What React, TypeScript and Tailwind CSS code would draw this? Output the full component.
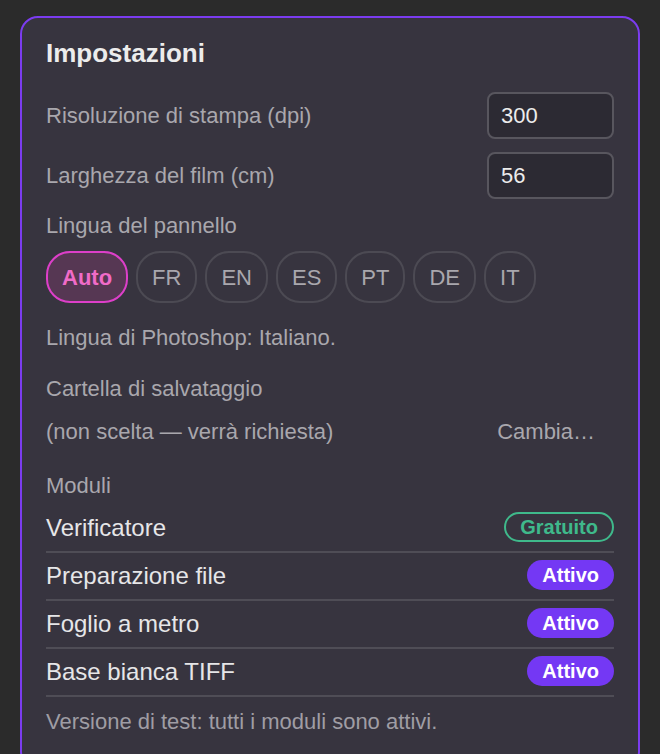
import { useState } from "react";

const lingue = ["Auto", "FR", "EN", "ES", "PT", "DE", "IT"];

const moduli = [
  { nome: "Verificatore", stato: "Gratuito" },
  { nome: "Preparazione file", stato: "Attivo" },
  { nome: "Foglio a metro", stato: "Attivo" },
  { nome: "Base bianca TIFF", stato: "Attivo" },
];

export default function App() {
  const [lingua, setLingua] = useState("Auto");
  const [dpi, setDpi] = useState("300");
  const [larghezza, setLarghezza] = useState("56");

  return (
    <div
      className="min-h-[754px] bg-[#2b2b2b] px-5 pt-4"
      style={{ fontFamily: '"Liberation Sans", Arial, sans-serif' }}
    >
      <div className="rounded-[18px] border-2 border-[#7b3cf0] bg-[#37343f] px-6 pt-[17px] pb-8">
        <h1 className="text-[26px] leading-[36px] font-bold text-[#ececec]">Impostazioni</h1>

        {/* Campi numerici */}
        <div className="mt-[21px] flex items-center justify-between">
          <label className="text-[22px] text-[#a9a7ad]">Risoluzione di stampa (dpi)</label>
          <input
            value={dpi}
            onChange={(e) => setDpi(e.target.value)}
            className="h-[47px] w-[127px] rounded-lg border-2 border-[#58565e] bg-[#2c2a33] px-3 text-[22px] text-[#ececec] outline-none"
          />
        </div>
        <div className="mt-[13px] flex items-center justify-between">
          <label className="text-[22px] text-[#a9a7ad]">Larghezza del film (cm)</label>
          <input
            value={larghezza}
            onChange={(e) => setLarghezza(e.target.value)}
            className="h-[47px] w-[127px] rounded-lg border-2 border-[#58565e] bg-[#2c2a33] px-3 text-[22px] text-[#ececec] outline-none"
          />
        </div>

        <div className="mt-[13px] text-[22px] leading-[28px] text-[#a9a7ad]">Lingua del pannello</div>
        <div className="mt-[11px] flex gap-2">
          {lingue.map((l) => (
            <button
              key={l}
              onClick={() => setLingua(l)}
              className={
                l === lingua
                  ? "h-[52px] rounded-[24px] border-2 border-[#dd3fc9] bg-[#563753] px-[14px] text-[22px] font-bold text-[#f06bc8]"
                  : "h-[52px] rounded-[24px] border-2 border-[#4c4a53] px-[14px] text-[22px] text-[#a9a7ad]"
              }
            >
              {l}
            </button>
          ))}
        </div>

        <p className="mt-[21px] text-[22px] leading-[28px] text-[#a9a7ad]">
          Lingua di Photoshop: Italiano.
        </p>

        {/* Cartella */}
        <div className="mt-[23px] text-[22px] leading-[28px] text-[#a9a7ad]">Cartella di salvataggio</div>
        <div className="mt-[15px] flex items-center justify-between">
          <span className="text-[22px] leading-[28px] text-[#a9a7ad]">(non scelta — verrà richiesta)</span>
          <button className="px-[19px] text-[22px] leading-[28px] text-[#a9a7ad]">Cambia…</button>
        </div>

        {/* Moduli */}
        <div className="mt-[26px] text-[22px] leading-[28px] text-[#a9a7ad]">Moduli</div>
        <div className="mt-[5px]">
          {moduli.map((m) => (
            <div
              key={m.nome}
              className="flex h-[48px] items-center justify-between border-b-2 border-[#4f4d56]"
            >
              <span className="text-[24px] text-[#e6e6e8]">{m.nome}</span>
              {m.stato === "Gratuito" ? (
                <span className="mb-[2px] flex h-[30px] items-center rounded-full border-2 border-[#3fb98b] px-[14px] text-[20px] font-bold text-[#3fb98b]">
                  Gratuito
                </span>
              ) : (
                <span className="mb-[2px] flex h-[30px] items-center rounded-full bg-[#7438f4] px-[15px] text-[20px] font-bold text-white">
                  Attivo
                </span>
              )}
            </div>
          ))}
        </div>

        <p className="mt-[11px] text-[22px] leading-[28px] text-[#9f9da4]">
          Versione di test: tutti i moduli sono attivi.
        </p>
      </div>
    </div>
  );
}
